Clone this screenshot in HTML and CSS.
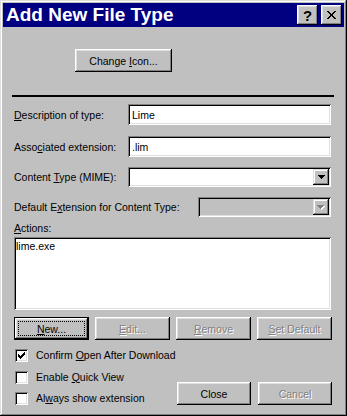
FILE: index.html
```html
<!DOCTYPE html>
<html lang="en">
  <head>
    <meta charset="UTF-8" />
    <title>Add New File Type</title>
    <link rel="stylesheet" href="styles.css">
  </head>
  <body>
    <div class="window">
      <div class="titlebar">
        <span class="title">Add New File Type</span>
        <div class="caption-buttons">
          <div class="caption-btn">?</div>
          <div class="caption-btn">
            <svg width="9" height="8" viewBox="0 0 9 8" shape-rendering="crispEdges">
              <path d="M0 0h2v1H0zM7 0h2v1H7zM1 1h2v1H1zM6 1h2v1H6zM2 2h2v1H2zM5 2h2v1H5zM3 3h3v2H3zM2 5h2v1H2zM5 5h2v1H5zM1 6h2v1H1zM6 6h2v1H6zM0 7h2v1H0zM7 7h2v1H7z" fill="#000"/>
            </svg>
          </div>
        </div>
      </div>

      <div class="content">
        <button class="btn change-icon"><span>Change <u>I</u>con...</span></button>
        <div class="separator"></div>

        <div class="row first">
          <label class="label"><u>D</u>escription of type:</label>
          <div class="field">Lime</div>
        </div>
        <div class="row second">
          <label class="label">Asso<u>c</u>iated extension:</label>
          <div class="field">.lim</div>
        </div>
        <div class="row">
          <label class="label">Content <u>T</u>ype (MIME):</label>
          <div class="field combo">
            <span class="combo-text"></span>
            <span class="combo-btn">
              <svg width="7" height="4" viewBox="0 0 7 4" shape-rendering="crispEdges">
                <path d="M0 0h7v1H0zM1 1h5v1H1zM2 2h3v1H2zM3 3h1v1H3z" fill="#000"/>
              </svg>
            </span>
          </div>
        </div>
        <div class="row">
          <label class="label wide">Default E<u>x</u>tension for Content Type:</label>
          <div class="field combo disabled small">
            <span class="combo-text"></span>
            <span class="combo-btn">
              <svg width="8" height="5" viewBox="0 0 8 5" shape-rendering="crispEdges">
                <path d="M1 1h7v1H1zM2 2h5v1H2zM3 3h3v1H3zM4 4h1v1H4z" fill="#fff"/>
                <path d="M0 0h7v1H0zM1 1h5v1H1zM2 2h3v1H2zM3 3h1v1H3z" fill="#808080"/>
              </svg>
            </span>
          </div>
        </div>

        <div class="actions-label"><u>A</u>ctions:</div>
        <div class="listbox">
          <div class="list-item">lime.exe</div>
        </div>

        <div class="action-buttons">
          <button class="btn default"><span class="focus"><span><u>N</u>ew...</span></span></button>
          <button class="btn disabled"><span><u>E</u>dit...</span></button>
          <button class="btn disabled"><span><u>R</u>emove</span></button>
          <button class="btn disabled"><span><u>S</u>et Default</span></button>
        </div>

        <div class="bottom">
          <div class="checks">
            <div class="check">
              <span class="box">
                <svg width="7" height="7" viewBox="0 0 7 7" shape-rendering="crispEdges">
                  <path d="M6 0h1v3H6zM5 1h1v3H5zM4 2h1v3H4zM3 3h1v3H3zM2 4h1v3H2zM1 3h1v3H1zM0 2h1v3H0z" fill="#000"/>
                </svg>
              </span>
              <span>Confirm <u>O</u>pen After Download</span>
            </div>
            <div class="check">
              <span class="box"></span>
              <span>Enable <u>Q</u>uick View</span>
            </div>
            <div class="check">
              <span class="box"></span>
              <span>Al<u>w</u>ays show extension</span>
            </div>
          </div>
          <div class="dialog-buttons">
            <button class="btn">Close</button>
            <button class="btn disabled">Cancel</button>
          </div>
        </div>
      </div>
    </div>
  </body>
</html>
```

FILE: styles.css
```css
* {
  box-sizing: border-box;
}
body {
  margin: 0;
  background: #c0c0c0;
  font-family: "Liberation Sans", Arial, sans-serif;
  font-size: 10.5px;
  color: #000;
}
.window {
  width: 347px;
  height: 416px;
  padding: 3px;
  background: #c0c0c0;
  box-shadow: inset -1px -1px #000, inset 1px 1px #dfdfdf,
    inset -2px -2px #808080, inset 2px 2px #fff;
}
.titlebar {
  height: 24px;
  background: #000080;
  display: flex;
  align-items: center;
  justify-content: space-between;
  padding: 0 2px 0 3px;
}
.title {
  color: #fff;
  font-weight: bold;
  font-size: 19px;
}
.caption-buttons {
  display: flex;
  gap: 3px;
}
.caption-btn {
  width: 21px;
  height: 20px;
  background: #c0c0c0;
  display: flex;
  align-items: center;
  justify-content: center;
  font-weight: bold;
  font-size: 15px;
  box-shadow: inset -1px -1px #000, inset 1px 1px #fff,
    inset -2px -2px #808080, inset 2px 2px #dfdfdf;
}
.content {
  padding: 0 12px 0 11px;
}
.btn {
  height: 23px;
  padding: 0;
  border: none;
  background: #c0c0c0;
  font: inherit;
  color: #000;
  white-space: nowrap;
  display: flex;
  align-items: center;
  justify-content: center;
  box-shadow: inset -1px -1px #000, inset 1px 1px #fff,
    inset -2px -2px #808080, inset 2px 2px #dfdfdf;
}
.btn.disabled {
  color: #808080;
  text-shadow: 1px 1px 0 #fff;
}
.btn.default {
  box-shadow: inset 0 0 0 1px #000, inset -2px -2px #000, inset 2px 2px #fff,
    inset -3px -3px #808080, inset 3px 3px #dfdfdf;
}
.focus {
  display: flex;
  align-items: center;
  justify-content: center;
  width: calc(100% - 8px);
  height: calc(100% - 8px);
  border: 1px dotted #000;
}
.change-icon {
  width: 97px;
  margin: 22px 0 0 61px;
}
.separator {
  height: 2px;
  background: #000;
  margin: 23px -2px 0;
}
.row {
  display: flex;
  align-items: center;
  margin-top: 10px;
}
.row.first {
  margin-top: 7px;
}
.row.second {
  margin-top: 11px;
}
.label {
  width: 114px;
  white-space: nowrap;
}
.label.wide {
  width: 184px;
}
.field {
  width: 203px;
  height: 21px;
  background: #fff;
  padding: 0 4px;
  display: flex;
  align-items: center;
  box-shadow: inset 1px 1px #808080, inset -1px -1px #fff,
    inset 2px 2px #000, inset -2px -2px #dfdfdf;
}
.combo {
  height: 20px;
  padding: 2px;
  justify-content: space-between;
  align-items: stretch;
}
.combo.small {
  width: 133px;
}
.combo.disabled {
  background: #c0c0c0;
}
.combo-btn {
  width: 16px;
  background: #c0c0c0;
  display: flex;
  align-items: center;
  justify-content: center;
  box-shadow: inset -1px -1px #000, inset 1px 1px #dfdfdf,
    inset -2px -2px #808080, inset 2px 2px #fff;
}
.actions-label {
  margin-top: 5px;
  line-height: 13px;
}
.listbox {
  width: 317px;
  height: 73px;
  margin-top: 2px;
  padding: 3px 2px;
  background: #fff;
  box-shadow: inset 1px 1px #808080, inset -1px -1px #fff,
    inset 2px 2px #000, inset -2px -2px #dfdfdf;
}
.action-buttons {
  display: flex;
  justify-content: space-between;
  margin-top: 7px;
}
.action-buttons .btn {
  width: 75px;
}
.bottom {
  display: flex;
  justify-content: space-between;
  align-items: flex-end;
  margin-top: 9px;
}
.checks {
  flex: none;
  display: flex;
  flex-direction: column;
  gap: 8.5px;
  padding-left: 1px;
}
.check {
  display: flex;
  align-items: center;
  height: 13px;
  line-height: 13px;
  gap: 8px;
  white-space: nowrap;
}
.box {
  flex: none;
  width: 13px;
  height: 13px;
  background: #fff;
  display: flex;
  align-items: center;
  justify-content: center;
  box-shadow: inset 1px 1px #808080, inset -1px -1px #fff,
    inset 2px 2px #000, inset -2px -2px #dfdfdf;
}
.dialog-buttons {
  display: flex;
  gap: 7px;
}
.dialog-buttons .btn {
  width: 74px;
}
```
